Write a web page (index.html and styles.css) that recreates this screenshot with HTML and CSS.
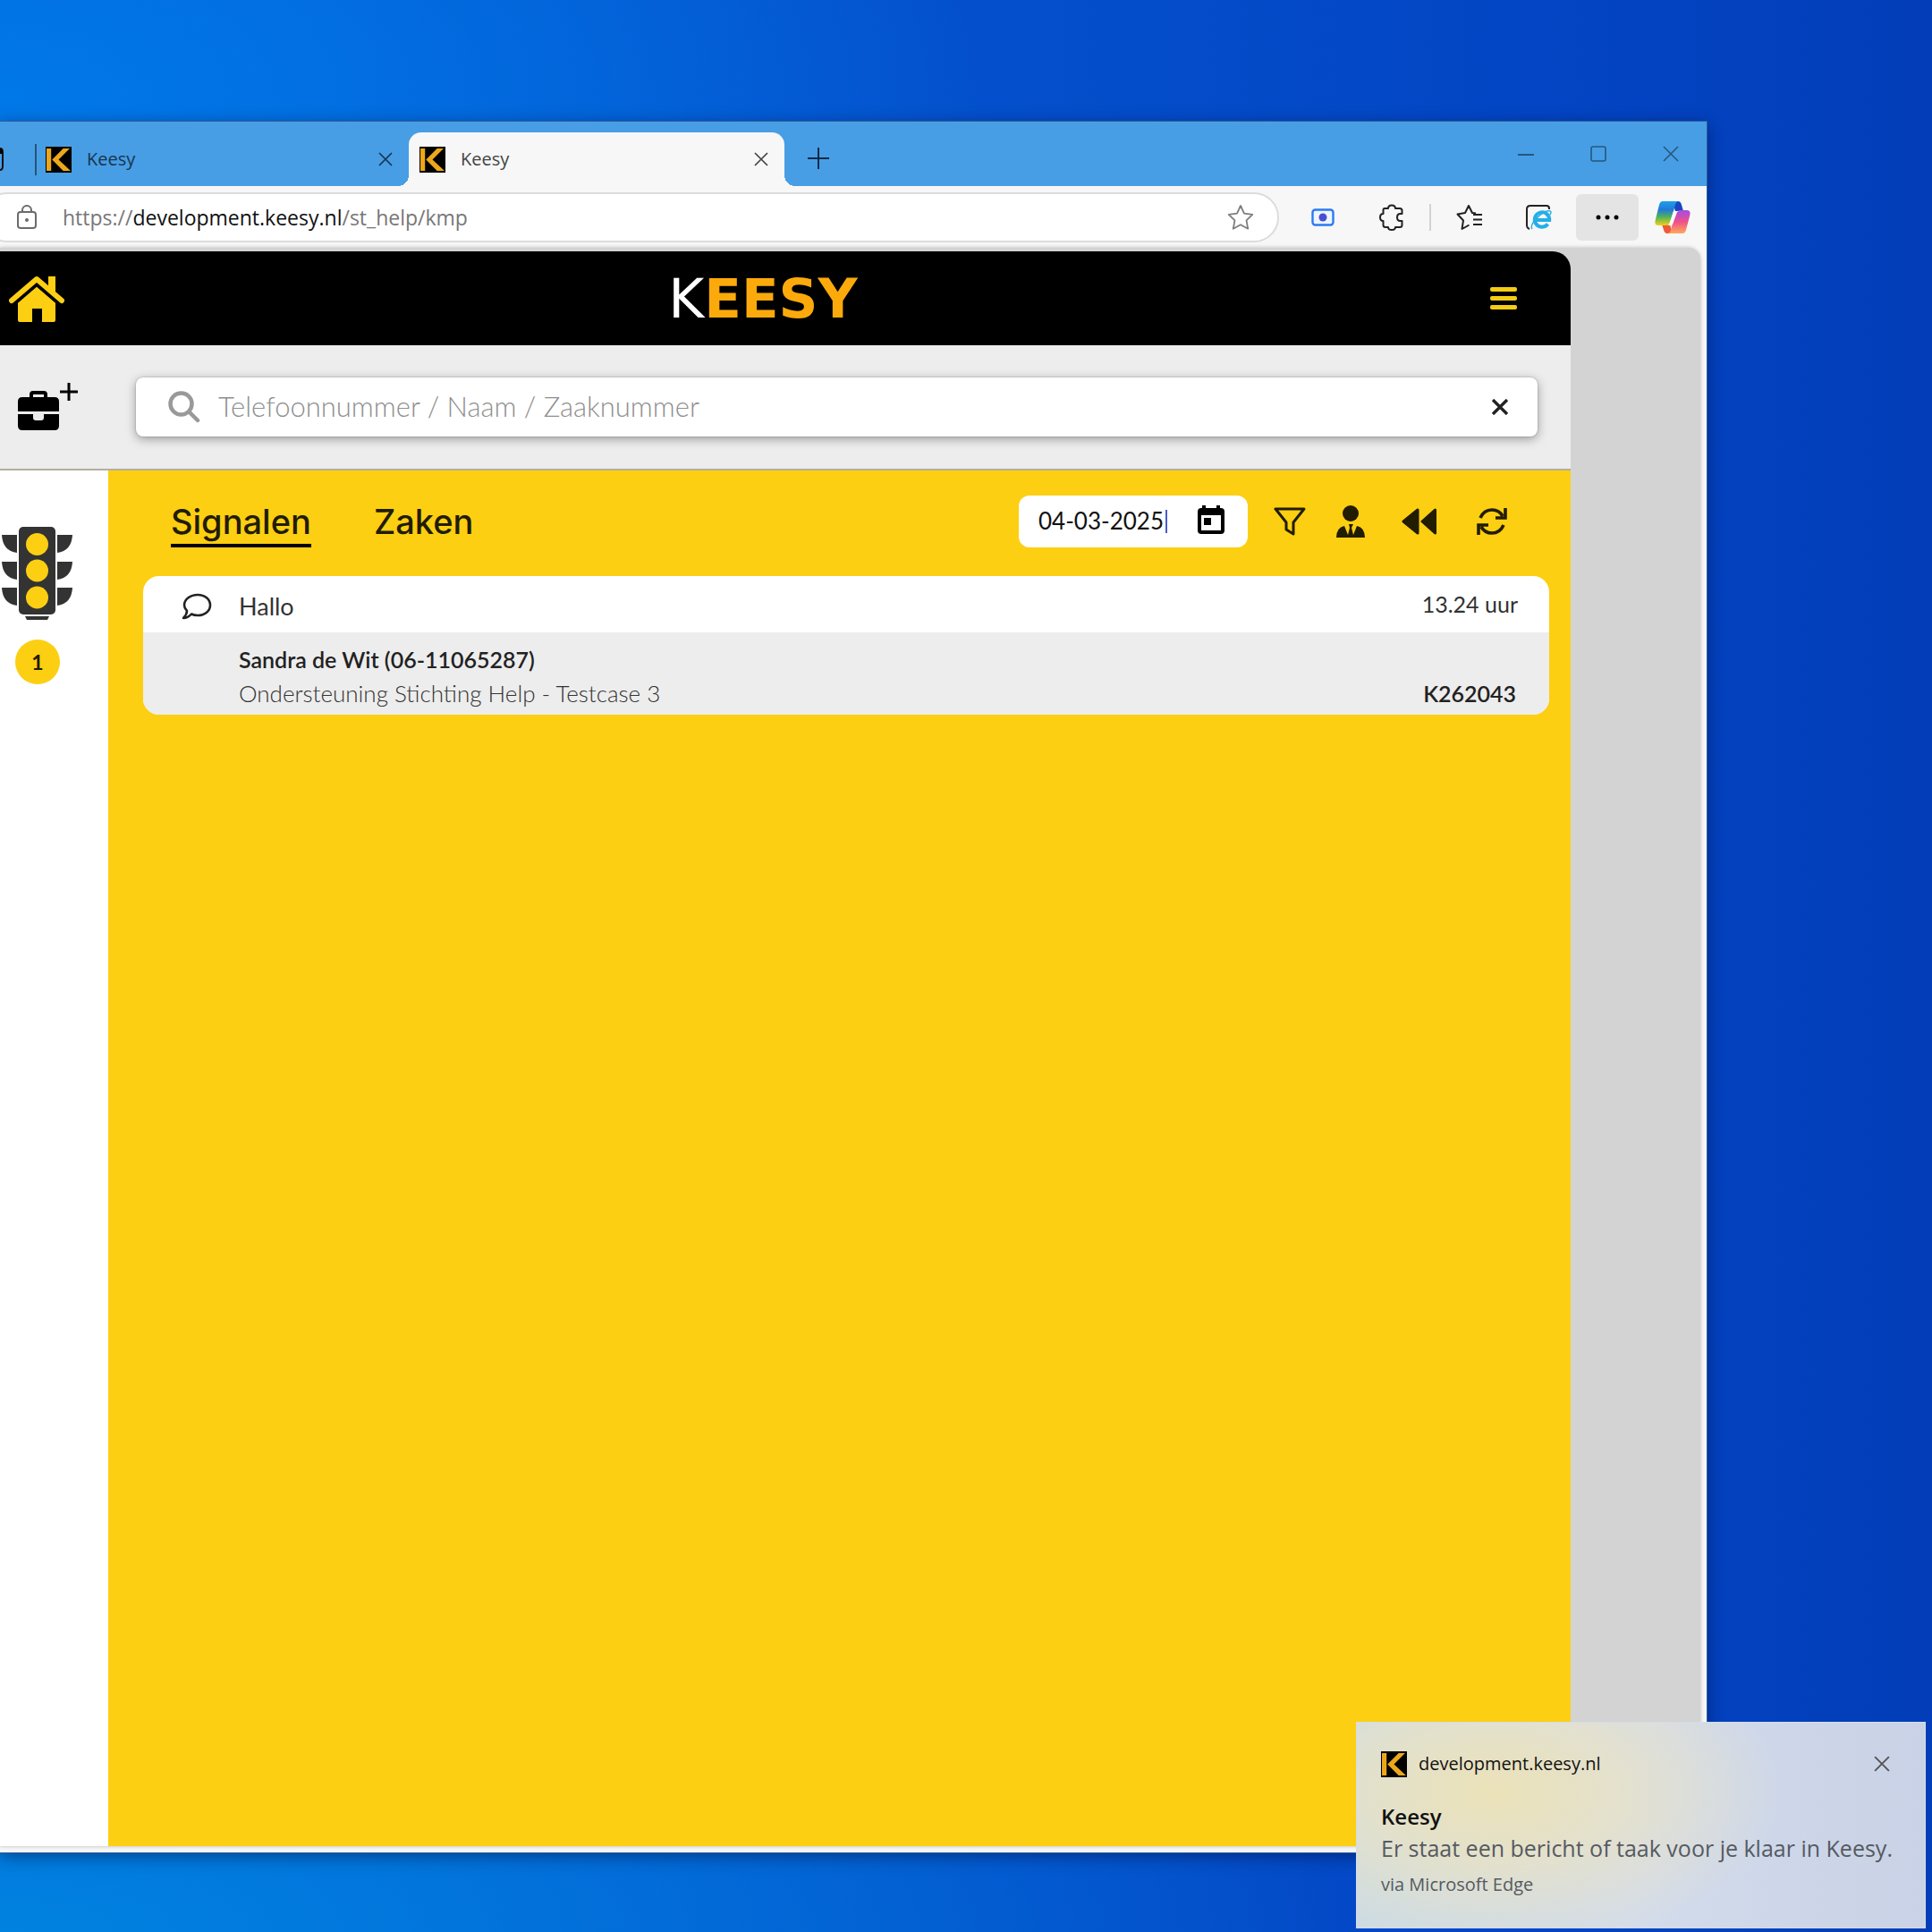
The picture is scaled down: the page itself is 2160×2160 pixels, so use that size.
FILE: index.html
```html
<!DOCTYPE html>
<html lang="nl">
<head>
<meta charset="utf-8">
<title>Keesy</title>
<link rel="stylesheet" href="styles.css">
</head>
<body class="desktop">
<svg class="defs" aria-hidden="true">
  <symbol id="mark" viewBox="0 0 28 28">
    <rect width="28" height="28" fill="#000"/>
    <path d="M1 2h5v24H1zM19 2h7L14 14l13 12h-8L7 14z" fill="#eda71a"/>
  </symbol>
  <symbol id="cross" viewBox="0 0 16 16"><path d="M1 1l14 14M15 1L1 15" fill="none" stroke="currentColor" stroke-width="1.7"/></symbol>
</svg>

<main class="window">
  <header class="tabstrip">
    <button class="workspace" aria-label="Werkruimten"><svg width="4" height="28" viewBox="0 0 4 28"><path d="M0 2q3 0 3 4v16q0 4-3 4" fill="none" stroke="#111" stroke-width="2"/><path d="M0 2q3 0 3 4v2H0z"/></svg></button>
    <div class="tab tab-first">
      <svg class="favicon"><use href="#mark"/></svg>
      <span class="tab-title">Keesy</span>
      <button class="tab-close" aria-label="Tabblad sluiten"><svg width="16" height="16"><use href="#cross"/></svg></button>
    </div>
    <div class="tab tab-active">
      <svg class="favicon"><use href="#mark"/></svg>
      <span class="tab-title">Keesy</span>
      <button class="tab-close" aria-label="Tabblad sluiten"><svg width="16" height="16"><use href="#cross"/></svg></button>
    </div>
    <button class="tab-new" aria-label="Nieuw tabblad"><svg width="26" height="26" viewBox="0 0 26 26"><path d="M13 1v24M1 13h24" stroke="#0d2c49" stroke-width="2"/></svg></button>
    <div class="controls">
      <button aria-label="Minimaliseren"><svg width="18" height="18" viewBox="0 0 18 18"><path d="M0 10h18" stroke="#25577f" stroke-width="2"/></svg></button>
      <button aria-label="Maximaliseren"><svg width="18" height="18" viewBox="0 0 18 18"><rect x="1" y="1" width="16" height="16" rx="2" fill="none" stroke="#25577f" stroke-width="1.6"/></svg></button>
      <button aria-label="Sluiten"><svg width="18" height="18" viewBox="0 0 18 18"><path d="M1 1l16 16M17 1L1 17" stroke="#25577f" stroke-width="1.6"/></svg></button>
    </div>
  </header>

  <nav class="toolbar">
    <div class="address">
      <svg width="24" height="30" viewBox="0 0 24 30" fill="none" stroke="#6b6b6b" stroke-width="2"><rect x="2" y="9" width="20" height="18" rx="3"/><path d="M7 9V7a5 5 0 0 1 10 0v2"/><circle cx="12" cy="18" r="1" fill="#6b6b6b"/></svg>
      <a class="url" href="#">https://<span class="host">development.keesy.nl</span>/st_help/kmp</a>
      <button aria-label="Favoriet"><svg width="30" height="30" viewBox="0 0 30 30" fill="none" stroke="#7d7d7d" stroke-width="1.8" stroke-linejoin="round"><path d="M15 2l4 8.600 9.300 1.200-6.800 6.600 1.700 9.300L15 23.200l-8.200 4.500 1.700-9.300-6.800-6.600 9.300-1.200z"/></svg></button>
    </div>
    <div class="tools">
      <button aria-label="Extensie"><svg width="26" height="20" viewBox="0 0 26 20"><rect x="1.500" y="1.500" width="23" height="17" rx="3" fill="#eef5ff" stroke="#2b7bf3" stroke-width="2.400"/><circle cx="13" cy="10" r="4.500" fill="#4a4fd0"/></svg></button>
      <button aria-label="Extensies"><svg width="28" height="30" viewBox="0 0 28 30" fill="none" stroke="#222" stroke-width="2" stroke-linejoin="round"><path d="M6 5h4q0-3.500 4-3.500T18 5h5q2.500 0 2.500 2.500V11h-2q-3.500 0-3.500 4t3.500 4h2v4.500Q25.500 26 23 26h-5q0 3-4 3t-4-3H7q-2.500 0-2.500-2.500V19Q1 19 1 15t3.500-4V7Q4.500 5 6 5z"/></svg></button>
      <i class="rule"></i>
      <button aria-label="Favorieten"><svg width="30" height="30" viewBox="0 0 30 30" fill="none" stroke="#222" stroke-width="2" stroke-linejoin="round"><path d="M22 10.500l-4-.5L14 2l-4 8-8.500 1.500L8 18.500 6.500 28l8-4.500M19 12h10M19 17.500h10M19 23h10"/></svg></button>
      <button aria-label="Internet Explorer-modus"><svg width="30" height="30" viewBox="0 0 30 30" fill="none"><path d="M27 6V5q0-3-3-3H6Q2 2 2 6v18q0 3 3 4" stroke="#222" stroke-width="2"/><path d="M25.500 22.500a8.200 8.200 0 1 1 1.700-4.500H12" stroke="#25aee8" stroke-width="4"/><path d="M8 28Q5 24 14 15t14-7q2 1 0 4" stroke="#25aee8" stroke-width="1.500"/></svg></button>
      <button class="more" aria-label="Meer"><svg width="26" height="6" viewBox="0 0 26 6"><circle cx="3" cy="3" r="2.500"/><circle cx="13" cy="3" r="2.500"/><circle cx="23" cy="3" r="2.500"/></svg></button>
      <button aria-label="Copilot"><svg width="40" height="38" viewBox="0 0 40 38">
        <defs>
          <linearGradient id="cpA" x2="0" y2="1"><stop offset="0" stop-color="#1aa0ea"/><stop offset=".35" stop-color="#2378d8"/><stop offset=".65" stop-color="#4fb35c"/><stop offset="1" stop-color="#f2cf16"/></linearGradient>
          <linearGradient id="cpB" x2="0" y2="1"><stop offset="0" stop-color="#a54ce6"/><stop offset=".5" stop-color="#ee5188"/><stop offset="1" stop-color="#ffa95b"/></linearGradient>
        </defs>
        <path d="M20 1h6q3 0 4 4l2 7h-9z" fill="#1746c0"/>
        <path d="M20 37h-6q-3 0-4-4l-2-6h9z" fill="#ee5a34"/>
        <path d="M9 1h18q-3 0-4 4l-5 18q-1 5-6 5H4q-5 0-3-7L5 5q1-4 4-4z" fill="url(#cpA)"/>
        <path d="M31 37H14q3 0 4-4l5-18q1-4 6-4h7q5 0 3 7l-4 15q-1 4-4 4z" fill="url(#cpB)"/>
        <path d="M21 12h6q-2 0-3 4l-3 8q-1 4-4 4h-3q2 0 3-4z" fill="#fff"/>
      </svg></button>
    </div>
  </nav>

  <div class="viewport">
    <div class="app">
      <header class="app-head">
        <a href="#" class="home" aria-label="Home"><svg width="62" height="52" viewBox="0 0 62 52" fill="#fccf12"><path d="M31 12l21 18v20q0 2-2 2H37V37H26v15H12q-2 0-2-2V30z"/><path d="M3 28L31 4l28 24" fill="none" stroke="#fccf12" stroke-width="6" stroke-linejoin="round" stroke-linecap="round"/><path d="M44 1h8v20l-8-7z"/><path d="M6 32.500L31 11l25 21.500" fill="none" stroke="#000" stroke-width="2.500"/></svg></a>
        <div class="logo"><span class="logo-k">K</span>EESY</div>
        <button class="menu" aria-label="Menu"><svg width="30" height="26" viewBox="0 0 30 26" fill="#f5cc14"><rect width="30" height="5" rx="2"/><rect y="10" width="30" height="5" rx="2"/><rect y="20" width="30" height="5" rx="2"/></svg></button>
      </header>

      <div class="search-row">
        <button class="new-case" aria-label="Nieuwe zaak"><svg width="68" height="54" viewBox="0 0 68 54"><path d="M13 16v-3q0-4 4-4h12q4 0 4 4v3h8q5 0 5 5v11H0V21q0-5 5-5zm4 0h12v-3H17zM0 35h17v4q0 3 3 3h6q3 0 3-3v-4h17v13q0 5-5 5H5q-5 0-5-5z" fill-rule="evenodd"/><path d="M57 0v20M47 10h20" stroke="#000" stroke-width="3"/></svg></button>
        <label class="search">
          <svg width="36" height="36" viewBox="0 0 36 36" fill="none" stroke="#999" stroke-width="4.500" stroke-linecap="round"><circle cx="14.500" cy="14.500" r="12"/><path d="M24 24l9 9"/></svg>
          <input type="text" placeholder="Telefoonnummer / Naam / Zaaknummer" aria-label="Zoeken">
          <button aria-label="Wissen"><svg width="20" height="18" viewBox="0 0 20 18"><path d="M2 1l16 16M18 1L2 17" stroke="#222" stroke-width="3.400"/></svg></button>
        </label>
      </div>

      <div class="body">
        <aside class="side">
          <svg width="82" height="104" viewBox="0 0 82 104" fill="#333"><rect x="21" width="41" height="98" rx="5"/><path d="M28 100h27l-2 4H30z"/><path id="w" d="M2 9h17v20Q3 27 2 9zM81 9H64v20q16-2 17-20z"/><use href="#w" y="30"/><use href="#w" y="59"/><g fill="#fccf12"><circle cx="41.500" cy="19.500" r="12.500"/><circle cx="41.500" cy="49" r="12.500"/><circle cx="41.500" cy="79" r="12.500"/></g></svg>
          <span class="badge">1</span>
        </aside>
        <section class="board">
          <div class="board-head">
            <a href="#" class="section-link current">Signalen</a>
            <a href="#" class="section-link">Zaken</a>
            <div class="date">
              <input type="text" value="04-03-2025" aria-label="Datum"><i class="caret"></i>
              <button aria-label="Kalender"><svg width="30" height="32" viewBox="0 0 30 32"><path d="M5 0h4v3h12V0h4v3h1q4 0 4 4v21q0 4-4 4H4q-4 0-4-4V7q0-4 4-4h1zM4 11v17h22V11zm3 3h8v8H7z" fill-rule="evenodd"/></svg></button>
            </div>
            <div class="actions">
              <button aria-label="Filter"><svg width="36" height="34" viewBox="0 0 36 34" fill="none" stroke="#221c00" stroke-width="3" stroke-linejoin="round"><path d="M2 3h32L22 18v13l-8-5v-8z"/></svg></button>
              <button aria-label="Medewerker"><svg width="32" height="36" viewBox="0 0 32 36" fill="#221c00"><circle cx="16" cy="9" r="9"/><path d="M0 36q0-11 9-13l4 10 2-8-1-4h5l-2 4 2 8 4-10q9 2 9 13z"/></svg></button>
              <button aria-label="Terug"><svg width="40" height="32" viewBox="0 0 40 32" fill="#221c00" stroke="#221c00" stroke-width="3" stroke-linejoin="round"><path d="M18 3v26L2 16zM37.500 3v26L23 16z"/></svg></button>
              <button aria-label="Vernieuwen"><svg width="34" height="32" viewBox="0 0 34 32" fill="none" stroke="#221c00" stroke-width="3.600"><path d="M4 12Q8 3 17 3q8 0 12 7M32 1v11H21M30 20q-4 9-13 9-8 0-12-7M2 31V20h11"/></svg></button>
            </div>
          </div>
          <article class="card">
            <div class="card-top">
              <svg width="34" height="30" viewBox="0 0 34 30" fill="none" stroke="#222" stroke-width="2.600" stroke-linejoin="round"><path d="M18 2c8 0 14 5 14 11.500S26 25 18 25q-4 0-7-1.500Q7 28 2 28q4-4 4-8-3-3-3-6.500C3 7 10 2 18 2z"/></svg>
              <span class="subject">Hallo</span>
              <time class="time">13.24 uur</time>
            </div>
            <div class="card-bottom">
              <strong class="person">Sandra de Wit (06-11065287)</strong>
              <span class="case">Ondersteuning Stichting Help - Testcase 3</span>
              <strong class="case-id">K262043</strong>
            </div>
          </article>
        </section>
      </div>
    </div>
  </div>
</main>

<section class="toast" role="alert">
  <div class="toast-head">
    <svg class="favicon"><use href="#mark"/></svg>
    <span class="toast-site">development.keesy.nl</span>
    <button aria-label="Melding sluiten"><svg width="18" height="18"><use href="#cross"/></svg></button>
  </div>
  <h2>Keesy</h2>
  <p class="toast-text">Er staat een bericht of taak voor je klaar in Keesy.</p>
  <p class="toast-via">via Microsoft Edge</p>
</section>
</body>
</html>
```

FILE: styles.css
```css
* { box-sizing: border-box; }
button { border: 0; background: none; padding: 0; margin: 0; color: inherit; font: inherit; display: flex; align-items: center; justify-content: center; }
a { color: inherit; text-decoration: none; }
svg { display: block; flex: none; }
.defs { position: absolute; width: 0; height: 0; }

.desktop {
  margin: 0;
  min-height: 100vh;
  position: relative;
  overflow: hidden;
  font-family: "Open Sans", "Noto Sans", sans-serif;
  background:
    radial-gradient(ellipse 1100px 500px at 0 110px, #0078e8, transparent),
    radial-gradient(ellipse 1500px 420px at 0 100%, #0082e0, transparent),
    linear-gradient(90deg, #0564da 0%, #0450cc 50%, #0345c4 80%, #033db8 100%);
}

/* Browser window */
.window {
  position: absolute;
  top: 136px;
  left: 0;
  right: 252px;
  bottom: 89px;
  display: flex;
  flex-direction: column;
  background: #f7f7f7;
  box-shadow: 0 0 0 1px #2d5c9c, 0 4px 18px rgba(0, 0, 40, .45);
}
.tabstrip { display: flex; height: 72px; background: #489ee4; padding-top: 12px; flex: none; }
.workspace { width: 4px; height: 60px; justify-content: flex-start; }
.favicon { width: 29px; height: 29px; }
.tab { width: 420px; display: flex; align-items: center; padding: 0 18px 0 12px; color: #17344f; }
.tab-first { width: 418px; margin-left: 35px; position: relative; }
.tab-first::before { content: ""; position: absolute; left: 0; top: 13px; height: 35px; width: 2px; background: #245379; }
.tab-title { font-size: 20px; line-height: 28px; margin-left: 17px; flex: 1; }
.tab-active { background: #f7f7f7; border-radius: 14px 14px 0 0; color: #444; position: relative; }
.tab-active::before, .tab-active::after { content: ""; position: absolute; bottom: 0; width: 12px; height: 12px; }
.tab-active::before { right: 100%; background: radial-gradient(circle at 0 0, #489ee4 12px, #f7f7f7 12px); }
.tab-active::after { left: 100%; background: radial-gradient(circle at 100% 0, #489ee4 12px, #f7f7f7 12px); }
.tab-new { margin-left: 25px; height: 58px; }
.controls { margin-left: auto; display: flex; gap: 63px; height: 48px; padding-right: 31px; }

.toolbar { display: flex; align-items: center; height: 69px; flex: none; }
.address {
  flex: 1;
  height: 56px;
  margin-left: -20px;
  padding: 0 26px 0 36px;
  display: flex;
  align-items: center;
  background: #fff;
  border: 2px solid #dcdcdc;
  border-radius: 28px;
}
.url { flex: 1; margin-left: 28px; font-size: 23px; line-height: 32px; color: #777; }
.host { color: #111; }
.tools { display: flex; align-items: center; padding-left: 36px; padding-right: 18px; }
.tools button + button { margin-left: 50px; }
.rule { width: 2px; height: 30px; background: #d2d2d2; margin: 0 28px; }
.tools .rule + button + button { margin-left: 47px; }
.tools button.more.more { width: 70px; height: 52px; margin-left: 27px; background: #e4e4e4; border-radius: 6px; }
.tools .more + button { margin-left: 18px; }

.viewport { flex: 1; display: flex; margin-right: 7px; margin-bottom: 7px; padding: 4px 145px 0 0; background: #d3d3d3; border-radius: 0 14px 0 0; box-shadow: 0 0 4px rgba(0, 0, 0, .25); }
.app { flex: 1; display: flex; flex-direction: column; font-family: Lato, "Open Sans", sans-serif; }
.app-head { height: 105px; background: #000; border-radius: 0 20px 0 0; display: grid; grid-template-columns: 1fr auto 1fr; align-items: center; padding: 0 60px 0 10px; }
.logo { color: #fca90c; font-family: "DejaVu Sans", sans-serif; font-size: 61px; line-height: 70px; font-weight: 700; }
.logo-k { color: #fff; font-weight: 400; }
.menu { justify-self: end; }

.search-row { height: 140px; background: #ededed; border-bottom: 2px solid #b3aea0; display: flex; align-items: center; padding: 0 37px 0 20px; gap: 64px; }
.search { flex: 1; height: 66px; display: flex; align-items: center; padding: 0 32px 0 36px; background: #fff; border-radius: 8px; box-shadow: 0 3px 12px rgba(0, 0, 0, .35), 0 0 2px rgba(0, 0, 0, .3); }
.search input { flex: 1; border: 0; background: none; outline: 0; margin-left: 20px; padding: 0 0 2px; font: 300 31px/40px Lato, sans-serif; color: #222; }
.search input::placeholder { color: #8e8e8e; opacity: 1; }

.body { flex: 1; display: flex; }
.side { width: 121px; background: #fff; padding-top: 63px; display: flex; flex-direction: column; }
.badge { width: 50px; height: 50px; margin: 22px 0 0 17px; border-radius: 50%; background: #fccf12; display: grid; place-items: center; font-size: 23px; font-weight: 700; color: #221c00; }
.board { flex: 1; background: #fccf12; padding: 28px 24px 0 39px; }
.board-head { display: flex; align-items: flex-start; height: 90px; padding-left: 31px; padding-right: 47px; }
.section-link { font-family: Inter, sans-serif; font-size: 38px; line-height: 50px; padding-top: 4px; border-bottom: 4px solid transparent; margin-right: 70px; color: #221c00; font-weight: 500; }
.current { border-color: #000; }
.date { margin-left: auto; height: 58px; display: flex; align-items: center; background: #fff; border-radius: 12px; padding: 0 26px 0 22px; }
.date input { width: 142px; border: 0; padding: 0 0 2px; background: none; outline: 0; font: 400 26px/32px Lato, sans-serif; color: #111; }
.caret { width: 2px; height: 26px; background: #4a5bd0; margin-right: 34px; }
.date button { padding-bottom: 4px; }
.actions { display: flex; align-items: center; height: 58px; margin-left: 29px; }
.actions button:nth-child(2) { margin-left: 34px; }
.actions button:nth-child(3) { margin-left: 41px; }
.actions button:nth-child(4) { margin-left: 44px; }

.card { border-radius: 18px; overflow: hidden; background: #fff; font-size: 26px; line-height: 38px; color: #333; }
.card-top { height: 63px; display: flex; align-items: center; padding: 4px 35px 0 43px; }
.subject { margin-left: 30px; flex: 1; font-size: 27px; }
.time { padding-bottom: 6px; font-size: 25px; }
.card-bottom { background: #ededed; display: grid; grid-template-columns: 1fr auto; padding: 11px 37px 5px 107px; }
.person { grid-column: 1 / 3; }
.person, .case-id { font-weight: 600; font-size: 25px; color: #222; }
.case { font-weight: 300; }

/* Notification */
.toast {
  position: absolute;
  right: 7px;
  bottom: 4px;
  width: 637px;
  height: 231px;
  padding: 29px 28px 0 27px;
  border: 1px solid #d5dcec;
  background:
    radial-gradient(ellipse 320px 180px at 24% 34%, #ebe2b8, rgba(232, 226, 198, .8) 45%, transparent),
    linear-gradient(90deg, #cadbe6, #d3dcec 50%, #c9d2e6);
}
.toast-head { display: flex; align-items: center; height: 34px; }
.toast-site { font-size: 20px; line-height: 28px; margin-left: 13px; flex: 1; color: #111; }
.toast-head button { margin-right: 11px; color: #555; }
.toast h2 { margin: 24px 0 0; font-size: 24px; line-height: 35px; font-weight: 600; color: #111; }
.toast p { margin: 0; color: #555a62; }
.toast-text { font-size: 25px; line-height: 36px; white-space: nowrap; }
.toast .toast-via { font-size: 20px; line-height: 28px; margin-top: 9px; }
```
